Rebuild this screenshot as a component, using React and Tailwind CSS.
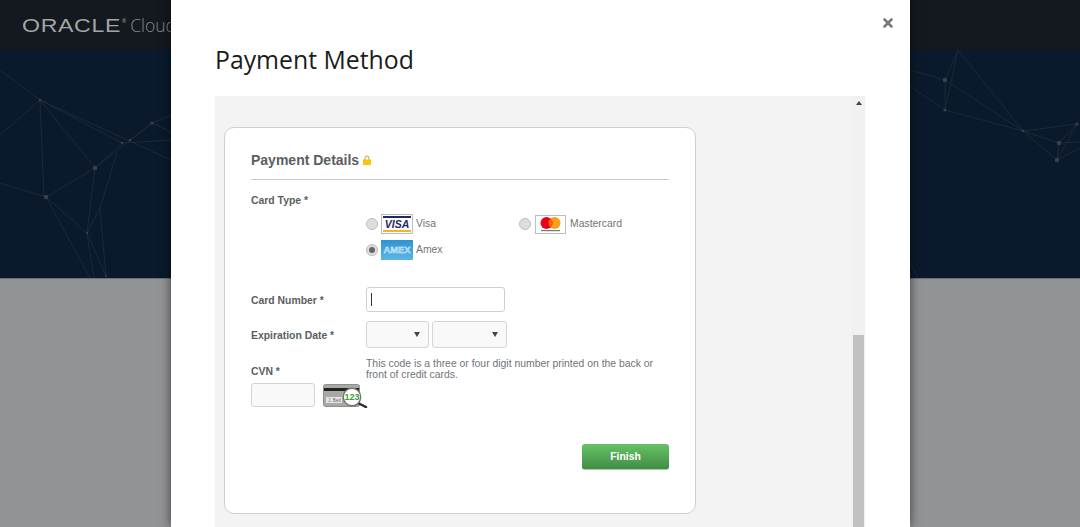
import { X } from 'lucide-react';

const arial = "font-['Liberation_Sans',Arial,sans-serif]";

// Faint network drawing behind the banner
const nodes = [
    [40, 100, 1.2], [95, 168, 2.2], [46, 197, 2.2], [122, 143, 1.2], [130, 140, 1.2], [152, 123, 1.5], [87, 233, 1], [106, 276, 1],
    [945, 80, 2.2], [945, 110, 1.6], [1023, 131, 1.2], [1059, 143, 2.2], [1057, 160, 2.2], [1077, 124, 1.5],
];
const links = [
    [0, 70, 40, 100], [40, 100, 95, 168], [40, 100, 44, 197], [40, 100, 122, 143], [40, 100, 171, 160],
    [46, 197, 95, 168], [95, 168, 122, 143], [95, 168, 152, 123], [122, 143, 171, 140], [130, 140, 152, 123],
    [152, 123, 171, 132], [152, 123, 171, 115], [0, 183, 46, 197], [46, 197, 87, 233], [95, 168, 87, 233],
    [87, 233, 106, 276], [87, 233, 94, 278], [46, 197, 90, 278], [100, 208, 117, 153], [100, 208, 106, 276],
    [87, 233, 100, 208], [0, 135, 40, 100],
    [910, 70, 945, 80], [910, 86, 945, 110], [945, 80, 945, 110], [945, 80, 958, 50], [945, 110, 958, 50],
    [945, 80, 1023, 131], [945, 110, 1023, 131], [958, 50, 1023, 131], [1023, 131, 1059, 143],
    [1023, 131, 1057, 160], [1023, 131, 1077, 124], [1059, 143, 1057, 160], [1059, 143, 1077, 124],
    [1057, 160, 1077, 124], [1057, 160, 1080, 148], [1059, 143, 1080, 142], [910, 262, 918, 278],
];

function Network() {
    return (
        <svg className="absolute inset-0 w-full h-full" viewBox="0 0 1080 228" preserveAspectRatio="none">
            <g transform="translate(0 -50)">
                {links.map((l, i) => (
                    <line key={i} x1={l[0]} y1={l[1]} x2={l[2]} y2={l[3]} stroke="#1f2d3b" strokeWidth="0.8" />
                ))}
                {nodes.map((n, i) => (
                    <circle key={i} cx={n[0]} cy={n[1]} r={n[2]} fill="#38424e" />
                ))}
            </g>
        </svg>
    );
}

function Radio({ checked }) {
    return (
        <span className="w-[12px] h-[12px] rounded-full bg-[#dedede] border border-[#bcbcbc] flex items-center justify-center shrink-0">
            {checked && <span className="w-[6px] h-[6px] rounded-full bg-[#666]" />}
        </span>
    );
}

function VisaLogo() {
    return (
        <svg width="32" height="20" viewBox="0 0 32 20">
            <rect x="0.5" y="0.5" width="31" height="19" fill="#fff" stroke="#bdbdbd" />
            <rect x="2" y="2" width="28" height="2" fill="#1a2a6c" />
            <rect x="2" y="16" width="28" height="2" fill="#f4b330" />
            <text x="16" y="13.5" textAnchor="middle" fontFamily="Liberation Sans" fontWeight="700" fontStyle="italic" fontSize="10.5" fill="#1a2a6c">VISA</text>
        </svg>
    );
}

function MastercardLogo() {
    return (
        <svg width="31" height="19" viewBox="0 0 31 19">
            <rect x="0.5" y="0.5" width="30" height="18" fill="#fff" stroke="#bdbdbd" />
            <circle cx="19.5" cy="8" r="6" fill="#f79e1b" />
            <circle cx="11.5" cy="8" r="6" fill="#eb001b" />
            <path d="M15.5 3.5a6 6 0 0 1 0 9a6 6 0 0 1 0-9z" fill="#ff5f00" />
            <rect x="6" y="15" width="19" height="1.2" fill="#777" />
        </svg>
    );
}

function AmexLogo() {
    return (
        <svg width="32" height="20" viewBox="0 0 32 20">
            <defs>
                <linearGradient id="amexFill" x1="0" y1="0" x2="0" y2="1">
                    <stop offset="0" stopColor="#2f93d2" />
                    <stop offset="1" stopColor="#5ab6e6" />
                </linearGradient>
            </defs>
            <rect width="32" height="20" fill="url(#amexFill)" />
            <text x="16" y="13" textAnchor="middle" textLength="27" lengthAdjust="spacingAndGlyphs" fontFamily="Liberation Sans" fontWeight="700" fontSize="8.5" fill="#8fd0f0" stroke="#e6f5fc" strokeWidth="0.3">AMEX</text>
        </svg>
    );
}

function CvnPicture() {
    return (
        <svg width="45" height="25" viewBox="0 0 45 25">
            <rect x="0.5" y="1.5" width="36" height="22" rx="2" fill="#a9aaa6" stroke="#8f908c" />
            <rect x="1" y="5" width="35" height="3" fill="#222" />
            <rect x="3" y="14" width="16" height="6" fill="#e6e6e6" />
            <text x="5" y="19" fontFamily="Liberation Sans" fontSize="4.5" fill="#666">J. Bed</text>
            <line x1="35" y1="20" x2="43" y2="24" stroke="#2e2e2e" strokeWidth="2.5" strokeLinecap="round" />
            <circle cx="29" cy="14" r="8.7" fill="#fff" stroke="#6f7a68" strokeWidth="1.4" />
            <text x="29" y="17.2" textAnchor="middle" fontFamily="Liberation Sans" fontWeight="700" fontSize="9" fill="#3c9a3c">123</text>
        </svg>
    );
}

function SelectBox({ width }) {
    return (
        <div className={`${width} h-[27px] bg-[#f9f9f9] border border-[#d4d4d4] rounded-[3px] flex items-center justify-end pr-[8px]`}>
            <span className="w-0 h-0 border-x-[3px] border-x-transparent border-t-[5px] border-t-[#444]" />
        </div>
    );
}

export default function App() {
    return (
        <div className="relative h-[527px] overflow-hidden bg-[#929395]">
            {/* Page behind the dialog */}
            <header className="h-[50px] bg-[#14191f] flex items-center pl-[22px] font-['Open_Sans',sans-serif] text-[#a3a5a6]">
                <span className={`${arial} mt-[3px] text-[17.5px] leading-none tracking-[0.5px] scale-x-[1.32] origin-left w-[100px]`}>ORACLE</span>
                <span className="text-[5px] leading-none -mt-2 mr-1">®</span>
                <span className="text-[17.5px] font-light text-[#85888b]">Cloud</span>
            </header>
            <div className="relative h-[229px] bg-[#0a1a2c] border-b border-[#6b7077]">
                <Network />
            </div>

            {/* Dialog */}
            <div className={`absolute inset-y-0 left-[171px] w-[739px] bg-white flex flex-col shadow-[0_0_10px_rgba(0,0,0,0.6)] ${arial}`}>
                <div className="flex justify-end pt-[16px] pr-[15px] h-[30px]">
                    <X className="w-[14px] h-[14px] text-[#7a7a7a]" strokeWidth={4.5} />
                </div>
                <h1 className="ml-[44px] h-[66px] pt-[12px] text-[24.8px] leading-[34px] font-['Open_Sans',sans-serif] text-[#1c1c1c]">Payment Method</h1>

                <div className="ml-[44px] w-[650px] flex-1 bg-[#f3f3f3] flex min-h-0">
                    <div className="flex-1 pl-[9px] pt-[31px]">
                        <div className="w-[472px] h-[387px] bg-white border border-[#cfcfcf] rounded-[10px] px-[26px] pt-[24px] text-[#5a5e62]">
                            <div className="pb-[11px] border-b border-[#cccccc] flex items-center gap-[4px] h-[28px]">
                                <h2 className="text-[14px] leading-[16px] font-bold">Payment Details</h2>
                                <svg width="8" height="10" viewBox="0 0 8 10">
                                    <path d="M2 5V3a2 2 0 0 1 4 0v2" fill="none" stroke="#b9a24a" strokeWidth="1" />
                                    <rect y="4.5" width="8" height="5.5" rx="0.5" fill="#fdc400" />
                                </svg>
                            </div>

                            <p className="mt-[14px] text-[10.4px] leading-[14px] font-bold">Card Type *</p>
                            <div className="mt-[6px] ml-[115px] grid grid-cols-[153px_1fr] gap-y-[6px] text-[10.4px] text-[#707478]">
                                <div className="flex items-center gap-[3px]">
                                    <Radio /><VisaLogo /><span>Visa</span>
                                </div>
                                <div className="flex items-center gap-[4px]">
                                    <Radio /><MastercardLogo /><span>Mastercard</span>
                                </div>
                                <div className="flex items-center gap-[3px]">
                                    <Radio checked /><AmexLogo /><span>Amex</span>
                                </div>
                            </div>

                            <div className="mt-[27px] flex items-center">
                                <p className="w-[115px] pt-[2px] text-[10.4px] font-bold">Card Number *</p>
                                <div className="w-[139px] h-[25px] bg-white border border-[#cfcfcf] rounded-[3px] flex items-center pl-[4px]">
                                    <span className="w-px h-[13px] bg-[#333]" />
                                </div>
                            </div>

                            <div className="mt-[9px] flex items-center">
                                <p className="w-[115px] pt-[2px] text-[10.4px] font-bold">Expiration Date *</p>
                                <div className="flex gap-[3px]">
                                    <SelectBox width="w-[63px]" />
                                    <SelectBox width="w-[75px]" />
                                </div>
                            </div>

                            <div className="mt-[10px] flex items-end">
                                <p className="w-[115px] text-[10.4px] leading-[14px] font-bold pb-px">CVN *</p>
                                <p className="w-[300px] text-[10.4px] leading-[11px] text-[#707478]">This code is a three or four digit number printed on the back or front of credit cards.</p>
                            </div>

                            <div className="mt-[3px] flex items-start gap-[8px]">
                                <div className="w-[64px] h-[24px] bg-[#f9f9f9] border border-[#d4d4d4] rounded-[3px]" />
                                <CvnPicture />
                            </div>

                            <div className="mt-[36px] flex justify-end">
                                <button className="w-[87px] h-[26px] rounded-[3px] bg-gradient-to-b from-[#66c266] to-[#418e45] border-b border-[#a8cfa8] text-white text-[10.4px] font-bold">Finish</button>
                            </div>
                        </div>
                    </div>

                    {/* Scrollbar */}
                    <div className="w-[13px] bg-[#f1f1f1] flex flex-col items-center pt-[5px]">
                        <span className="w-0 h-0 border-x-[3px] border-x-transparent border-b-[4px] border-b-[#444]" />
                        <div className="mt-[230px] flex-1 w-[11px] bg-[#c1c1c1]" />
                    </div>
                </div>
            </div>
        </div>
    );
}
